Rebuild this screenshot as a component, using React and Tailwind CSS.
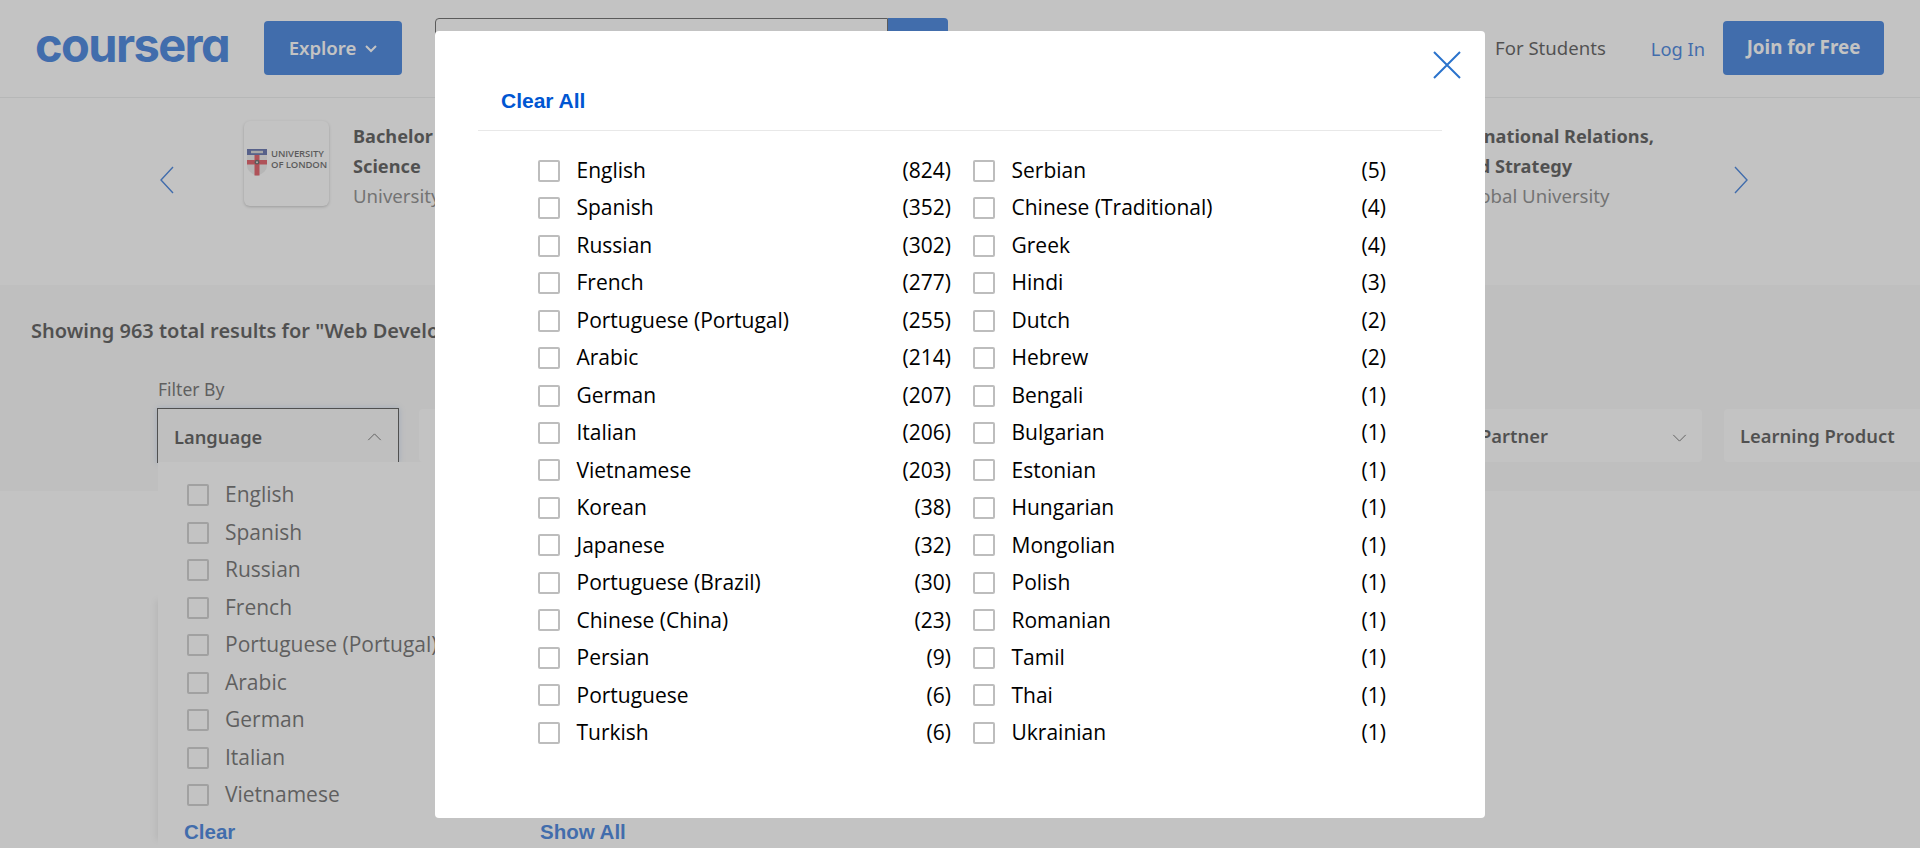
const left = [["English",824],["Spanish",352],["Russian",302],["French",277],["Portuguese (Portugal)",255],["Arabic",214],["German",207],["Italian",206],["Vietnamese",203],["Korean",38],["Japanese",32],["Portuguese (Brazil)",30],["Chinese (China)",23],["Persian",9],["Portuguese",6],["Turkish",6]];
const right = [["Serbian",5],["Chinese (Traditional)",4],["Greek",4],["Hindi",3],["Dutch",2],["Hebrew",2],["Bengali",1],["Bulgarian",1],["Estonian",1],["Hungarian",1],["Mongolian",1],["Polish",1],["Romanian",1],["Tamil",1],["Thai",1],["Ukrainian",1]];
const panel = left.slice(0, 9).map((x) => x[0]);
const sans = "font-['Noto_Sans','Open_Sans',sans-serif]";

function Chevron({ dir, className }) {
  const d = { left: "M14 1 L2 14 L14 27", right: "M2 1 L14 14 L2 27" }[dir];
  return (
    <svg viewBox="0 0 16 28" className={className} fill="none" stroke="#0056d2" strokeWidth="1.4">
      <path d={d} />
    </svg>
  );
}

function Caret({ up, className }) {
  return (
    <svg viewBox="0 0 16 9" className={className} fill="none" stroke="#3c3c3c" strokeWidth="1.1">
      <path d={up ? "M1 8 L8 1 L15 8" : "M1 1 L8 8 L15 1"} />
    </svg>
  );
}

function Box({ className = "" }) {
  return <span className={"block w-[22px] h-[22px] shrink-0 border-2 border-[#bdbdbd] rounded-[2px] bg-white " + className} />;
}

function LondonLogo() {
  return (
    <div className="w-[85px] h-[85px] shrink-0 rounded-[6px] bg-white shadow-[0_1px_3px_rgba(0,0,0,0.3)] flex items-start pl-[3px] pt-[28px] gap-[4px]">
      <svg viewBox="0 0 20 27" className="w-[20px] h-[27px] shrink-0">
        <path d="M0 0 H20 V17 Q20 23 10 27 Q0 23 0 17 Z" fill="#e6e6e6" />
        <rect x="0" y="0" width="20" height="6" fill="#2b3f8f" />
        <rect x="4" y="1.8" width="12" height="2.4" fill="#c9c9c9" />
        <rect x="7.5" y="6" width="5" height="20.5" fill="#d8222f" />
        <path d="M0 11 H20 V15.5 H0 Z" fill="#d8222f" />
        <circle cx="10" cy="13.2" r="2.4" fill="#333" />
        <circle cx="10" cy="13.2" r="1" fill="#ddd" />
      </svg>
      <div className="font-['Open_Sans',sans-serif] font-semibold text-[9.5px] leading-[10.5px] text-[#333] whitespace-nowrap tracking-[-0.1px]">
        UNIVERSITY<br />OF LONDON
      </div>
    </div>
  );
}

function FilterBox({ label, className = "" }) {
  return (
    <div className={"h-[53px] shrink-0 rounded-[4px] bg-white flex items-center justify-between px-[16px] " + className}>
      <span className={sans + " font-semibold text-[18.4px] text-[#1f1f1f] whitespace-nowrap"}>{label}</span>
      <Caret className="w-[15px] h-[8px] mt-[4px] -mr-[1px]" />
    </div>
  );
}

function Column({ rows }) {
  return (
    <div className="w-[413px]">
      {rows.map(([name, n]) => (
        <div key={name} className="h-[37.47px] flex items-center">
          <Box />
          <span className="ml-[16.5px] text-[21px] text-black">{name}</span>
          <span className="ml-auto text-[21px] text-black">({n})</span>
        </div>
      ))}
    </div>
  );
}

export default function App() {
  return (
    <div className={"relative h-screen w-full overflow-hidden bg-white " + sans}>
      <header className="h-[98px] border-b border-[#e5e7e8] flex items-center pl-[35px] pr-[36px] pb-[2px]">
        <div className="w-[193px] font-['Inter',sans-serif] font-bold text-[47px] leading-none tracking-[-1.6px] text-[#0056d2] [font-feature-settings:'cv11'] -mt-[6px]">coursera</div>
        <button className="ml-[36px] w-[138px] h-[54px] rounded-[4px] bg-[#0056d2] flex items-center justify-center gap-[9px] text-white font-semibold text-[18.6px]">
          Explore
          <svg viewBox="0 0 12 8" className="w-[12px] h-[8px] mt-[2px]" fill="none" stroke="#fff" strokeWidth="2"><path d="M1 1 L6 6 L11 1" /></svg>
        </button>
        <div className="ml-[33px] w-[513px] h-[54px] flex -mt-[6px]">
          <div className="flex-1 border border-[#333] rounded-l-[4px] bg-white" />
          <div className="w-[60px] rounded-r-[4px] bg-[#0056d2]" />
        </div>
        <span className="ml-auto text-[18.6px] text-[#1f1f1f] whitespace-nowrap">For Students</span>
        <span className="ml-[45px] mt-[2px] text-[18.3px] text-[#0056d2] whitespace-nowrap">Log In</span>
        <button className="ml-[18px] w-[161px] h-[54px] rounded-[4px] bg-[#0056d2] text-white font-bold text-[18.8px] pb-[1px]">Join for Free</button>
      </header>

      <section className="h-[187px] flex pl-[159px] pt-[22px]">
        <Chevron dir="left" className="w-[16px] h-[28px] mt-[46px]" />
        <div className="ml-[69px] mt-[1px]"><LondonLogo /></div>
        <div className="ml-[24px] w-[600px] leading-[30px] whitespace-nowrap text-[18.2px] mt-[1px]">
          <div className="font-bold text-[#1f1f1f]">Bachelor of Science in Computer</div>
          <div className="font-bold text-[#1f1f1f]">Science</div>
          <div className="text-[#636363] text-[18.6px]">University of London</div>
        </div>
        <div className="ml-[503px] w-[277px] leading-[30px] whitespace-nowrap text-[18.2px] mt-[1px]">
          <div className="font-bold text-[#1f1f1f] -ml-[18px]">International Relations,</div>
          <div className="font-bold text-[#1f1f1f]">and Strategy</div>
          <div className="text-[#636363] text-[18.6px] ml-[5px]">Global University</div>
        </div>
        <Chevron dir="right" className="w-[16px] h-[28px] mt-[46px]" />
      </section>

      <section className="h-[206px] bg-[#f7f7f7] pt-[33px]">
        <div className="pl-[31px] font-semibold text-[20px] leading-[26px] text-[#1f1f1f] whitespace-nowrap">Showing 963 total results for "Web Development"</div>
        <div className="pl-[158px] mt-[35px] text-[17.5px] leading-[20px] text-[#3c3c3c]">Filter By</div>
        <div className="pl-[157px] mt-[9px] flex items-start gap-[20px] w-[2200px]">
          <div className="relative w-[242px] h-[55px] border border-b-0 border-[#1f1f1f] bg-[#f7f7f7] flex items-center justify-between pl-[16px] pr-[16px] pt-[2px] shadow-[0_0_6px_rgba(0,86,210,0.25)]">
            <span className="font-semibold text-[18.3px] text-[#1f1f1f]">Language</span>
            <Caret up className="w-[15px] h-[8px]" />
          </div>
          <FilterBox label="Subject" className="w-[242px] mt-[1px]" />
          <FilterBox label="Skills" className="w-[242px] mt-[1px]" />
          <FilterBox label="Level" className="w-[242px] mt-[1px]" />
          <FilterBox label="Duration" className="w-[242px] mt-[1px]" />
          <FilterBox label="Partner" className="w-[235px] mt-[1px] pl-[13px]" />
          <FilterBox label="Learning Product" className="w-[242px] mt-[1px] ml-[2px]" />
        </div>
      </section>

      {/* soft edge of the results card that lies under the dropdown */}
      <div className="absolute left-[158px] top-[600px] w-[300px] h-[240px] shadow-[-2px_0_6px_rgba(0,0,0,0.1)]" />

      {/* open Language dropdown */}
      <div className="absolute left-[158px] top-[462px] w-[490px] h-[420px] bg-white pl-[29px] pt-[14.5px]">
        {panel.map((name) => (
          <div key={name} className="h-[37.47px] flex items-center">
            <Box />
            <span className="ml-[16px] text-[21px] text-[#3c3c3c] whitespace-nowrap font-['Open_Sans',sans-serif]">{name}</span>
          </div>
        ))}
        <div className="absolute left-[26px] top-[355px] font-['Liberation_Sans',sans-serif] font-bold text-[20.5px] text-[#0056d2]">Clear</div>
        <div className="absolute left-[382px] top-[355px] font-['Liberation_Sans',sans-serif] font-bold text-[20.5px] text-[#0056d2]">Show All</div>
      </div>

      {/* backdrop + modal */}
      <div className="absolute inset-0 bg-[#858585]/[.49] flex justify-center items-start">
        <div className="relative mt-[31px] w-[1050px] h-[787px] rounded-[4px] bg-white font-['Open_Sans',sans-serif]">
          <svg viewBox="0 0 28 28" className="absolute left-[998px] top-[20px] w-[28px] h-[28px]" fill="none" stroke="#2a73cc" strokeWidth="2">
            <path d="M1 1 L27 27 M27 1 L1 27" />
          </svg>
          <div className="ml-[43px] mr-[43px] pt-[56px] h-[100px] border-b border-[#e8e8e8] pl-[23px]">
            <span className="font-['Liberation_Sans',sans-serif] font-bold text-[21px] leading-[28px] text-[#0056d2]">Clear All</span>
          </div>
          <div className="mt-[21px] ml-[103px] flex gap-[22px]">
            <Column rows={left} />
            <Column rows={right} />
          </div>
        </div>
      </div>
    </div>
  );
}
